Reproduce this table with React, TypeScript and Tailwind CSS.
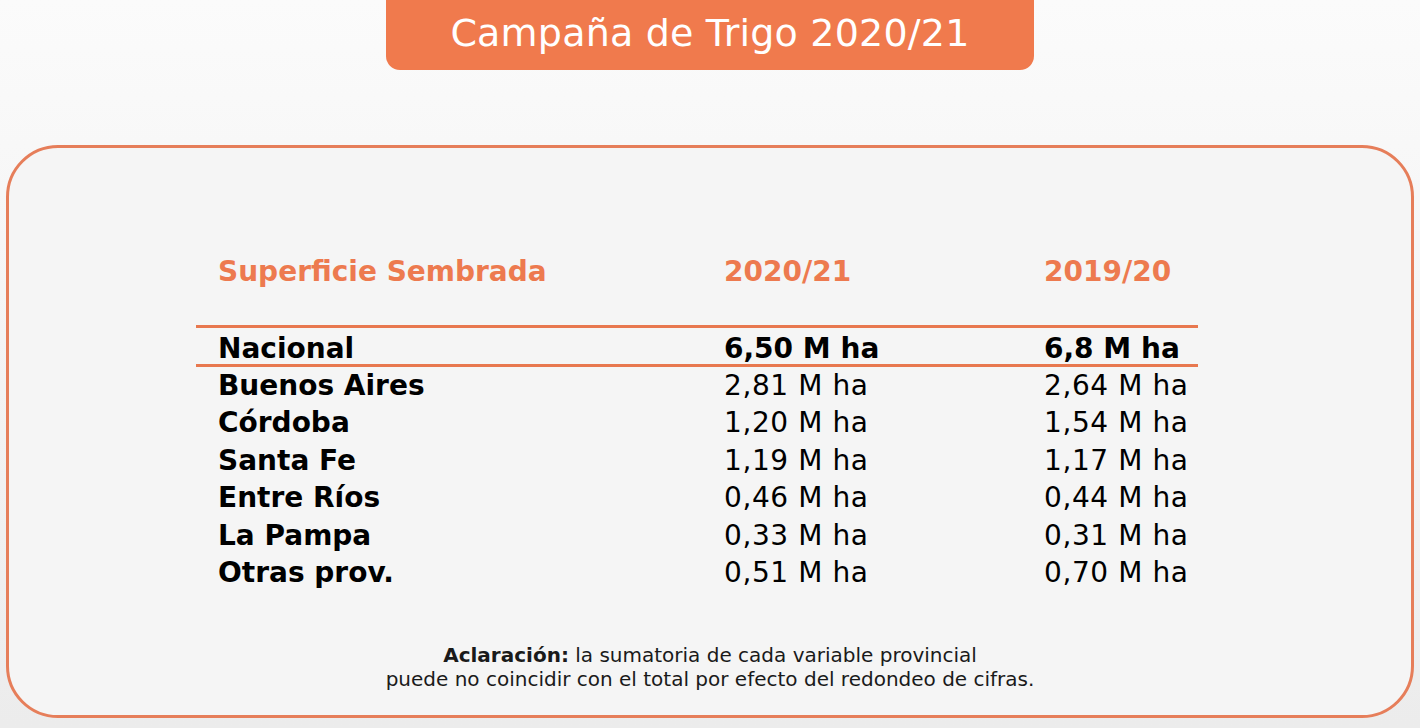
const provinces = [
  { name: "Buenos Aires", a: "2,81 M ha", b: "2,64 M ha" },
  { name: "Córdoba", a: "1,20 M ha", b: "1,54 M ha" },
  { name: "Santa Fe", a: "1,19 M ha", b: "1,17 M ha" },
  { name: "Entre Ríos", a: "0,46 M ha", b: "0,44 M ha" },
  { name: "La Pampa", a: "0,33 M ha", b: "0,31 M ha" },
  { name: "Otras prov.", a: "0,51 M ha", b: "0,70 M ha" },
];

export default function App() {
  return (
    <div
      className="flex h-[728px] w-full flex-col overflow-hidden bg-gradient-to-b from-[#fbfbfb] to-[#ececec] text-black"
      style={{ fontFamily: '"DejaVu Sans", sans-serif' }}
    >
      <header className="mx-auto flex h-[70px] w-[648px] shrink-0 items-center justify-center rounded-b-[14px] bg-[#f07a4d] pb-1">
        <h1 className="text-[38px] font-normal tracking-[0.2px] text-white">
          Campaña de Trigo 2020/21
        </h1>
      </header>

      <section className="mx-[6px] mt-[75px] h-[573px] shrink-0 rounded-[52px] border-[3px] border-[#e67e5a] bg-[#f5f5f5]">
        <div className="ml-[187px] w-[1002px] pt-[106px]">
          <div className="grid grid-cols-[506px_320px_1fr] pl-[22px] text-[28px] font-bold leading-[36px] text-[#ed7a4f]">
            <span>Superficie Sembrada</span>
            <span>2020/21</span>
            <span>2019/20</span>
          </div>

          <div className="mt-[35px] grid h-[42px] grid-cols-[506px_320px_1fr] items-center border-y-[3px] border-[#e8784f] pl-[22px] text-[28px] font-bold">
            <span>Nacional</span>
            <span>6,50 M ha</span>
            <span>6,8 M ha</span>
          </div>

          <ul className="text-[28px]">
            {provinces.map((p) => (
              <li key={p.name} className="grid grid-cols-[506px_320px_1fr] pl-[22px] leading-[37.4px]">
                <span className="font-bold">{p.name}</span>
                <span className="font-medium tracking-[0.6px]">{p.a}</span>
                <span className="font-medium tracking-[0.6px]">{p.b}</span>
              </li>
            ))}
          </ul>
        </div>

        <p className="mt-[52px] text-center text-[20px] leading-[24px] text-[#1a1a1a]">
          <strong className="font-bold">Aclaración:</strong> la sumatoria de cada variable provincial
          <br />
          puede no coincidir con el total por efecto del redondeo de cifras.
        </p>
      </section>
    </div>
  );
}
